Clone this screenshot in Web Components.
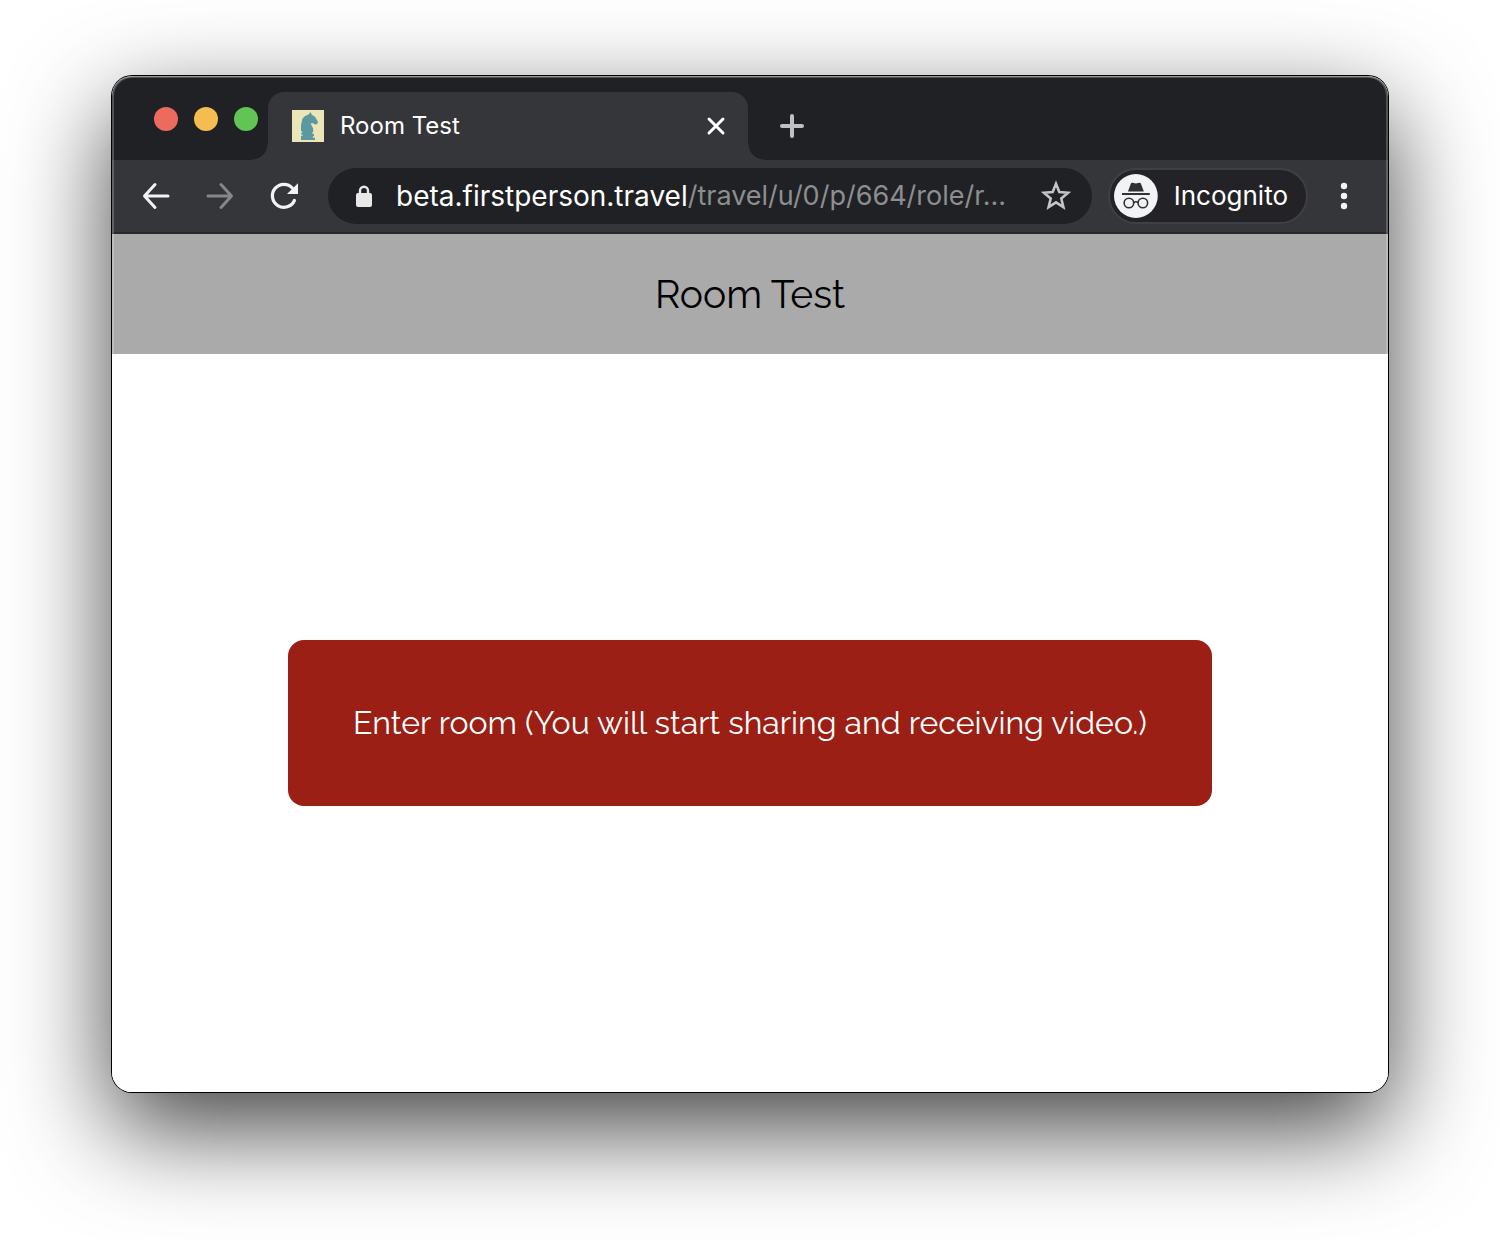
<!DOCTYPE html>
<html lang="en">
<head>
<meta charset="utf-8">
<title>Room Test</title>
<style>
body { margin: 0; background: #fff; font-family: Inter, "Liberation Sans", sans-serif; }
</style>
</head>
<body>
<browser-window>
  <tab-strip slot="tabs"><browser-tab>Room Test</browser-tab></tab-strip>
  <browser-toolbar slot="toolbar">
    <address-bar domain="beta.firstperson.travel" path="/travel/u/0/p/664/role/r..."></address-bar>
    <profile-chip>Incognito</profile-chip>
  </browser-toolbar>
  <room-page heading="Room Test">Enter room (You will start sharing and receiving video.)</room-page>
</browser-window>

<script>
const define = (name, markup, setup) => {
  const template = document.createElement('template');
  template.innerHTML = `<style>
    *, *::before, *::after { box-sizing: border-box; }
    button { border: 0; padding: 0; margin: 0; background: none; font: inherit; color: inherit; cursor: pointer; display: flex; align-items: center; justify-content: center; }
    svg { display: block; }
  </style>` + markup;
  customElements.define(name, class extends HTMLElement {
    constructor() {
      super();
      this.attachShadow({ mode: 'open' }).append(template.content.cloneNode(true));
    }
    connectedCallback() { if (setup) setup(this, this.shadowRoot); }
  });
};

define('browser-window', `<style>
  :host { display: flex; flex-direction: column; min-height: 100vh; padding: 76px 112px 148px; box-sizing: border-box; overflow: hidden; }
  .frame { position: relative; flex: 1; display: flex; flex-direction: column; border-radius: 20px; background: #fff;
    box-shadow: 0 0 0 1px #000, 0 36px 100px rgba(0,0,0,.75); }
  .clip { flex: 1; display: flex; flex-direction: column; border-radius: 20px; overflow: hidden; }
  .frame::after { content: ""; position: absolute; inset: 0; border-radius: 20px; pointer-events: none;
    box-shadow: inset 0 0 0 2px rgba(255,255,255,.22), inset 0 1px 0 rgba(255,255,255,.4); }
</style>
<div class="frame"><div class="clip"><slot name="tabs"></slot><slot name="toolbar"></slot><slot></slot></div></div>`);

define('tab-strip', `<style>
  :host { display: flex; align-items: flex-end; height: 84px; padding-left: 42px; background: #202124; }
  .lights { display: flex; gap: 16px; align-self: stretch; align-items: center; width: 114px; padding-top: 2px; }
  .lights button { width: 24px; height: 24px; border-radius: 50%; flex: none; }
  .close { background: #ed6a5e; } .min { background: #f5bd4f; } .max { background: #61c454; }
  .add { width: 56px; height: 68px; margin-left: 16px; }
</style>
<div class="lights"><button class="close" aria-label="Close window"></button><button class="min" aria-label="Minimize"></button><button class="max" aria-label="Zoom"></button></div>
<slot></slot>
<button class="add" aria-label="New tab"><svg width="24" height="24" viewBox="0 0 24 24" fill="none" stroke="#bdc1c6" stroke-width="4" stroke-linecap="round"><path d="M12 2v20M2 12h20"/></svg></button>`);

define('browser-tab', `<style>
  :host { position: relative; display: flex; align-items: center; gap: 16px; width: 480px; height: 68px; padding: 0 20px 0 24px; box-sizing: border-box;
    border-radius: 16px 16px 0 0; background: #35363a; color: #fff; font-size: 24px; line-height: 32px; }
  :host::before, :host::after { content: ""; position: absolute; bottom: 0; width: 16px; height: 16px; }
  :host::before { right: 100%; background: radial-gradient(circle at 0 0, transparent 15px, #35363a 16px); }
  :host::after { left: 100%; background: radial-gradient(circle at 100% 0, transparent 15px, #35363a 16px); }
  .title { flex: 1; }
  button { width: 24px; height: 24px; }
</style>
<svg width="32" height="32" viewBox="0 0 32 32"><rect width="32" height="32" fill="#ebe5b8"/><path fill="#5b99a0" d="M18.500 2l1.300 2.800 3.200 2 3 5-.8 2.200-2 .6-2.200-1.400-2.500.3 2.500 4.500.3 3-1.300 2.500 2 .5v2l-1.200.6v1.200h2.200V30H9v-4.200h1.800v-.8L9 24v-.8l1.500-.8L9 20.500V15l1.500-6.500L13 6l3.600-1.600z"/></svg>
<span class="title"><slot></slot></span>
<button aria-label="Close tab"><svg width="24" height="24" viewBox="0 0 24 24" stroke="#fff" stroke-width="3" stroke-linecap="round"><path d="M5 5l14 14M19 5L5 19"/></svg></button>`);

define('browser-toolbar', `<style>
  :host { display: flex; align-items: center; height: 74px; padding: 0 8px 0 12px; box-sizing: border-box; background: #35363a; border-bottom: 2px solid #28292c; }
  nav { display: flex; margin-right: 12px; }
  nav button { width: 64px; height: 56px; }
  .content { flex: 1; min-width: 0; display: flex; gap: 16px; }
  .menu { width: 72px; height: 56px; }
</style>
<nav aria-label="History">
  <button aria-label="Back"><svg width="32" height="32" viewBox="0 0 32 32" fill="none" stroke="#f1f3f4" stroke-width="3" stroke-linecap="round"><path d="M15 4.500L4.500 16 15 27.500M5 16h23" stroke-linejoin="round"/></svg></button>
  <button aria-label="Forward" disabled><svg width="32" height="32" viewBox="0 0 32 32" fill="none" stroke="#86878a" stroke-width="3" stroke-linecap="round"><path d="M17 4.500L27.500 16 17 27.500M27 16H4" stroke-linejoin="round"/></svg></button>
  <button aria-label="Reload"><svg width="32" height="32" viewBox="0 0 32 32" fill="none"><path d="M26.400 20.500A11.500 11.500 0 1 1 24.500 8.200" stroke="#f1f3f4" stroke-width="3.200" stroke-linecap="round"/><path d="M30 3.300V14H19z" fill="#f1f3f4"/></svg></button>
</nav>
<div class="content"><slot></slot></div>
<button class="menu" aria-label="Menu"><svg width="8" height="28" viewBox="0 0 8 28" fill="#f1f3f4"><circle cx="4" cy="4" r="3.200"/><circle cx="4" cy="14" r="3.200"/><circle cx="4" cy="24" r="3.200"/></svg></button>`);

define('address-bar', `<style>
  :host { flex: 1; min-width: 0; display: flex; align-items: center; height: 56px; border-radius: 28px; padding: 0 20px 0 24px; box-sizing: border-box; background: #202124; color: #fff; font-size: 27px; line-height: 36px; }
  .lock { margin-right: 20px; }
  label { flex: none; font-size: 28px; }
  input { flex: 1; min-width: 0; border: 0; padding: 0; margin: 0; background: none; outline: 0; color: #8d8e90; font: inherit; height: 36px; }
  button { width: 32px; height: 32px; }
</style>
<svg class="lock" width="24" height="24" viewBox="0 0 24 24"><path d="M8 11V6.800a4 4 0 0 1 8 0V11" fill="none" stroke="#e8e8e8" stroke-width="2.400"/><rect x="4" y="9" width="16" height="14" rx="2" fill="#e8e8e8"/></svg>
<label for="path"></label><input id="path" type="text" spellcheck="false">
<button aria-label="Bookmark"><svg width="32" height="32" viewBox="0 0 32 32"><path d="M16 3.800l3.300 8.300 8.700.7-6.700 5.700 2.100 8.600L16 22.400l-7.400 4.700 2.100-8.600L4 12.800l8.700-.7z" fill="none" stroke="#c3c4c5" stroke-width="2.600"/></svg></button>`,
(host, root) => {
  root.querySelector('label').textContent = host.getAttribute('domain');
  root.querySelector('input').value = host.getAttribute('path');
});

define('profile-chip', `<style>
  :host { display: block; flex: none; }
  button { width: 200px; height: 56px; padding: 0 18px 0 4px; gap: 16px; justify-content: flex-start; border: 2px solid #3f4044; border-radius: 28px; background: #232327; color: #fff; font-size: 26px; line-height: 36px; }
</style>
<button><svg width="44" height="44" viewBox="0 0 44 44"><circle cx="22" cy="22" r="22" fill="#f1f3f4"/><g fill="#303134"><path d="M14 17.500l3-8q.4-1.200 1.700-.8l3.300.8 3.300-.8q1.300-.4 1.700.8l3 8z"/><rect x="8" y="19" width="28" height="2"/></g><g fill="none" stroke="#303134" stroke-width="1.600"><circle cx="15" cy="29" r="4.800"/><circle cx="29" cy="29" r="4.800"/><path d="M19.800 28.500q2.200-1.400 4.400 0"/></g></svg><slot></slot></button>`);

define('room-page', `<style>
  :host { flex: 1; display: flex; flex-direction: column; background: #fff; font-family: Raleway, Lato, sans-serif; }
  header { display: flex; align-items: center; justify-content: center; height: 120px; background: #aaa; color: #000; }
  h1 { margin: 0; font-size: 39px; line-height: 48px; font-weight: 400; }
  main { flex: 1; display: flex; align-items: center; padding: 0 176px; }
  main button { width: 100%; padding: 64px 32px; border-radius: 16px; background: #9b1f14; color: #fff; font-size: 32px; line-height: 38px; white-space: nowrap; }
</style>
<header><h1></h1></header><main><button><slot></slot></button></main>`,
(host, root) => { root.querySelector('h1').textContent = host.getAttribute('heading'); });
</script>
</body>
</html>
